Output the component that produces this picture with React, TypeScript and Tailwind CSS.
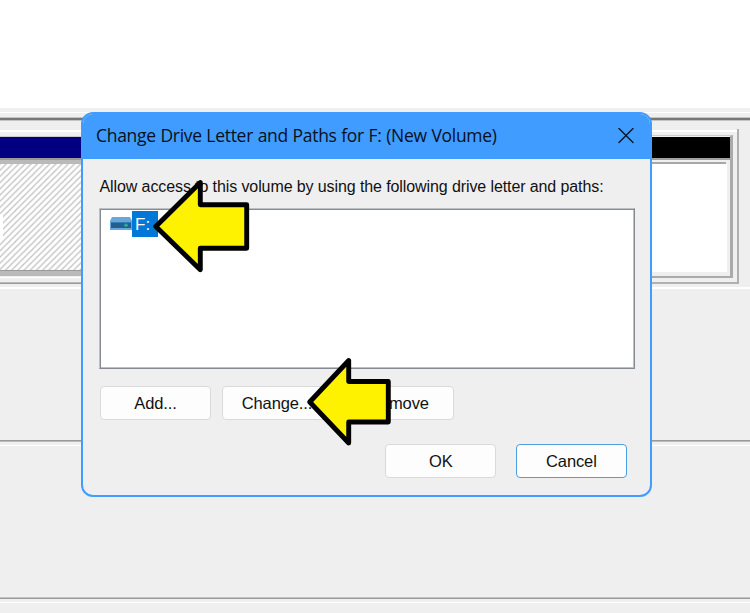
import type { ReactNode } from "react";

function Button({ children, className = "" }: { children: ReactNode; className?: string }) {
  return (
    <button
      className={`flex h-[34px] w-[111px] items-center justify-center rounded-[4px] border bg-[#fdfdfd] text-[16.5px] tracking-[-0.1px] text-[#111] ${className}`}
    >
      {children}
    </button>
  );
}

function Arrow({ points, className }: { points: string; className: string }) {
  return (
    <svg className={`absolute ${className}`} viewBox="0 0 100 96" width="100" height="96">
      <polygon points={points} fill="#fff200" stroke="#000" strokeWidth="4.9" strokeLinejoin="round" />
    </svg>
  );
}

function Hatch() {
  return (
    <svg className="block h-[106px] w-full bg-white">
      <defs>
        <pattern id="hatch" width="6.2" height="6.2" patternUnits="userSpaceOnUse">
          <path d="M-1.55 1.55L1.55 -1.55M0 6.2L6.2 0M4.65 7.75L7.75 4.65" stroke="#c4c4c4" strokeWidth="1.4" />
        </pattern>
      </defs>
      <rect width="100%" height="106" fill="url(#hatch)" />
      <rect y="50" width="3" height="25" fill="#fff" />
    </svg>
  );
}

function Background() {
  return (
    <div className="flex h-full flex-col">
      <div className="h-[108px] bg-white" />
      <div className="h-1" />
      <div className="h-px bg-white" />
      <div className="h-1" />
      <div className="h-px bg-[#c4c4c4]" />
      <div className="h-[2px] bg-[#777]" />
      <div className="h-px bg-[#c4c4c4]" />
      <div className="h-[8px]" />
      <div className="flex h-[158px] justify-between">
        <div className="w-[100px] pt-px">
          <div className="h-[2px] bg-white" />
          <div className="h-1" />
          <div className="h-px bg-[#ccc]" />
          <div className="h-[21px] bg-[#000080]" />
          <div className="h-[2px] bg-[#999]" />
          <div className="h-1 bg-[#bababa]" />
          <Hatch />
          <div className="h-px bg-[#999]" />
          <div className="h-[5px] bg-[#bababa]" />
          <div className="h-px" />
          <div className="h-px bg-white" />
          <div className="h-1" />
          <div className="h-px bg-[#bbb]" />
          <div className="h-px bg-[#999]" />
        </div>
        <div className="mr-[11px] h-[155px] w-[100px] border-r-2 border-b-2 border-[#b0b0b0]">
          <div className="mt-px h-[2px] bg-white" />
          <div className="mt-[3px] mr-1 h-[143px] border-t border-r-[3px] border-b-2 border-t-[#ccc] border-r-[#aaa] border-b-[#aaa]">
            <div className="mt-px h-[21px] bg-black" />
            <div className="h-[2px] bg-[#a0a0a0]" />
            <div className="mt-[2px] mr-1 h-[2px] bg-[#a8a8a8]" />
            <div className="mr-[3px] h-[108px] bg-white" />
          </div>
        </div>
      </div>
      <div className="h-[2px] bg-white" />
      <div className="h-[151px]" />
      <div className="h-px bg-[#999]" />
      <div className="h-px bg-[#bbb]" />
      <div className="h-[3px]" />
      <div className="h-px bg-white" />
      <div className="h-[151px]" />
      <div className="h-px bg-[#c4c4c4]" />
      <div className="h-px bg-[#999]" />
      <div className="h-[3px]" />
      <div className="h-px bg-white" />
    </div>
  );
}

export default function App() {
  return (
    <div className="relative h-[613px] w-[750px] overflow-hidden bg-[#efefef] font-['Liberation_Sans',Arial,sans-serif]">
      <Background />
      <section className="absolute top-[112px] left-[81px] h-[385px] w-[571px] overflow-hidden rounded-[12px] border-2 border-[#409cff] bg-[#efefef]">
        <header className="flex h-[45px] items-center justify-between bg-[#409cff] pr-[16.5px] pb-[2px] pl-[13px]">
          <h1 className="font-['Open_Sans','Noto_Sans',sans-serif] text-[17.5px] tracking-[-0.3px] [word-spacing:0.4px] whitespace-nowrap text-[#08101c]">
            Change Drive Letter and Paths for F: (New Volume)
          </h1>
          <svg width="16" height="16" viewBox="0 0 16 16" stroke="#0b1623" strokeWidth="1.4" strokeLinecap="round">
            <path d="M1 0.6L15 14.6M15 0.6L1 14.6" />
          </svg>
        </header>
        <div className="px-4">
          <p className="mt-[17px] h-[21px] pl-[0.5px] text-[16px] leading-[21px] tracking-[-0.1px] whitespace-nowrap text-[#111]">
            Allow access to this volume by using the following drive letter and paths:
          </p>
          <div className="mt-[11px] flex h-[161px] w-[536px] items-start border border-t-[#bdbfc3] border-r-[#858a93] border-b-[#858a93] border-l-[#bdbfc3] bg-white pt-[2px] pl-[10px] shadow-[inset_1px_1px_0_#858a93,inset_-1px_-1px_0_#bdbfc3]">
            <svg className="mt-[6px]" width="22" height="14" viewBox="0 0 22 14">
              <path d="M2 0H20L22 4V13H0V4Z" fill="#6aa6da" />
              <path d="M1 5H21V11H1Z" fill="#205f93" />
              <path d="M1 5H21V6H1Z" fill="#367db6" />
              <path d="M14 8.2H18M16 6.5V10" stroke="#29b58d" strokeWidth="1.4" />
            </svg>
            <span className="h-[26px] w-[26px] bg-[#0078d7] pl-[3px] text-[17px] leading-[27px] text-white">F:</span>
          </div>
          <div className="mt-[17px] ml-px flex gap-[10.5px]">
            <Button className="border-[#dadada]">Add...</Button>
            <Button className="border-[#dadada]">Change...</Button>
            <Button className="border-[#dadada]">Remove</Button>
          </div>
          <div className="mt-[24px] ml-[286.4px] flex gap-[19.5px]">
            <Button className="border-[#dadada]">OK</Button>
            <Button className="border-[#4c9fe0]">Cancel</Button>
          </div>
        </div>
      </section>
      <Arrow className="top-[178px] left-[150px]" points="5.8,48.5 50.3,4.5 50.3,26.7 96.7,26.7 96.7,70.3 50.3,70.3 50.3,91.7" />
      <Arrow className="top-[356px] left-[304px]" points="5.7,46 44.7,4.5 44.7,25.5 84.3,25.5 84.3,66 44.7,66 44.7,87" />
    </div>
  );
}
